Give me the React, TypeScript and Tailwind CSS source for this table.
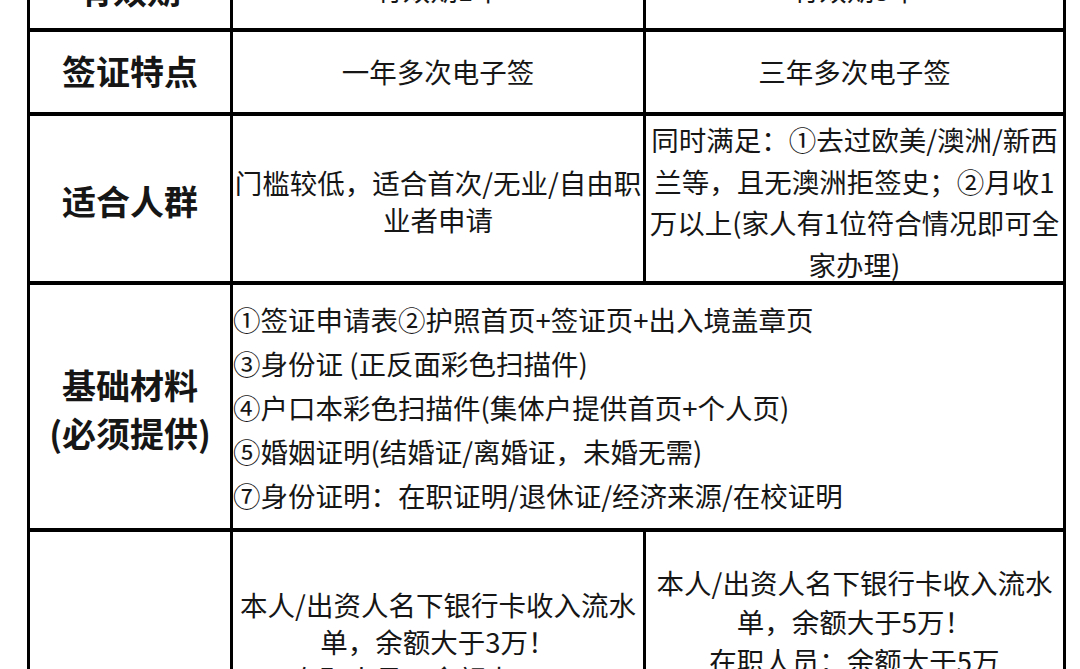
import React from "react";

const font = { fontFamily: '"Noto Sans CJK SC", "Noto Sans", sans-serif' };

function Lines({ lines, className }: { lines: string[]; className: string }) {
  return (
    <div className={className}>
      {lines.map((l, i) => (
        <div key={i} className="whitespace-nowrap">
          {l}
        </div>
      ))}
    </div>
  );
}

export default function App() {
  return (
    <div
      className="w-[1080px] h-[669px] overflow-hidden bg-white text-[#161616]"
      style={font}
    >
      <div className="ml-[27px] mt-[-48px] w-[1039px] border-x-[3px] border-black">
        {/* Row 0 (cut off at top) */}
        <div className="grid grid-cols-[203px_413px_417px] h-[80px] border-b-[4px] border-black">
          <div className="border-r-[3px] border-black flex items-center justify-center text-[34px] font-bold leading-none">
            有效期
          </div>
          <div className="border-r-[3px] border-black flex items-center justify-center text-[27.5px] leading-none">
            有效期1年
          </div>
          <div className="flex items-center justify-center text-[27.5px] leading-none">
            有效期3年
          </div>
        </div>

        {/* Row 1 */}
        <div className="grid grid-cols-[203px_413px_417px] h-[84px] border-b-[4px] border-black">
          <div className="border-r-[3px] border-black flex items-center justify-center text-[34px] font-bold leading-none pb-[2px]">
            签证特点
          </div>
          <div className="border-r-[3px] border-black flex items-center justify-center text-[27.5px] leading-none">
            一年多次电子签
          </div>
          <div className="flex items-center justify-center text-[27.5px] leading-none">
            三年多次电子签
          </div>
        </div>

        {/* Row 2 */}
        <div className="grid grid-cols-[203px_413px_417px] h-[169px] border-b-[4px] border-black">
          <div className="border-r-[3px] border-black flex items-center justify-center text-[34px] font-bold leading-none">
            适合人群
          </div>
          <div className="border-r-[3px] border-black flex items-center justify-center">
            <Lines
              className="text-[27.5px] leading-[37px] text-center"
              lines={["门槛较低，适合首次/无业/自由职", "业者申请"]}
            />
          </div>
          <div className="flex items-center justify-center pt-[3px]">
            <Lines
              className="text-[27.5px] leading-[41.5px] text-center"
              lines={[
                "同时满足：①去过欧美/澳洲/新西",
                "兰等，且无澳洲拒签史；②月收1",
                "万以上(家人有1位符合情况即可全",
                "家办理)",
              ]}
            />
          </div>
        </div>

        {/* Row 3 */}
        <div className="grid grid-cols-[203px_836px] h-[247px] border-b-[4px] border-black">
          <div className="border-r-[3px] border-black flex items-center justify-center pt-[4px]">
            <Lines
              className="text-[34px] font-bold leading-[48px] text-center"
              lines={["基础材料", "(必须提供)"]}
            />
          </div>
          <div className="flex items-center">
            <Lines
              className="text-[27.5px] leading-[44px] text-left"
              lines={[
                "①签证申请表②护照首页+签证页+出入境盖章页",
                "③身份证 (正反面彩色扫描件)",
                "④户口本彩色扫描件(集体户提供首页+个人页)",
                "⑤婚姻证明(结婚证/离婚证，未婚无需)",
                "⑦身份证明：在职证明/退休证/经济来源/在校证明",
              ]}
            />
          </div>
        </div>

        {/* Row 4 */}
        <div className="grid grid-cols-[203px_413px_417px] h-[380px]">
          <div className="border-r-[3px] border-black flex items-center justify-center text-[34px] font-bold leading-none">
            资金证明
          </div>
          <div className="border-r-[3px] border-black pt-[54px]">
            <Lines
              className="text-[27.5px] leading-[37px] text-center"
              lines={[
                "本人/出资人名下银行卡收入流水",
                "单，余额大于3万！",
                "在职人员：余额大于3万",
                "自由职业：余额大于5万",
              ]}
            />
          </div>
          <div className="pt-[31px]">
            <Lines
              className="text-[27.5px] leading-[39px] text-center"
              lines={[
                "本人/出资人名下银行卡收入流水",
                "单，余额大于5万！",
                "在职人员：余额大于5万",
                "自由职业：余额大于10万",
              ]}
            />
          </div>
        </div>
      </div>
    </div>
  );
}
